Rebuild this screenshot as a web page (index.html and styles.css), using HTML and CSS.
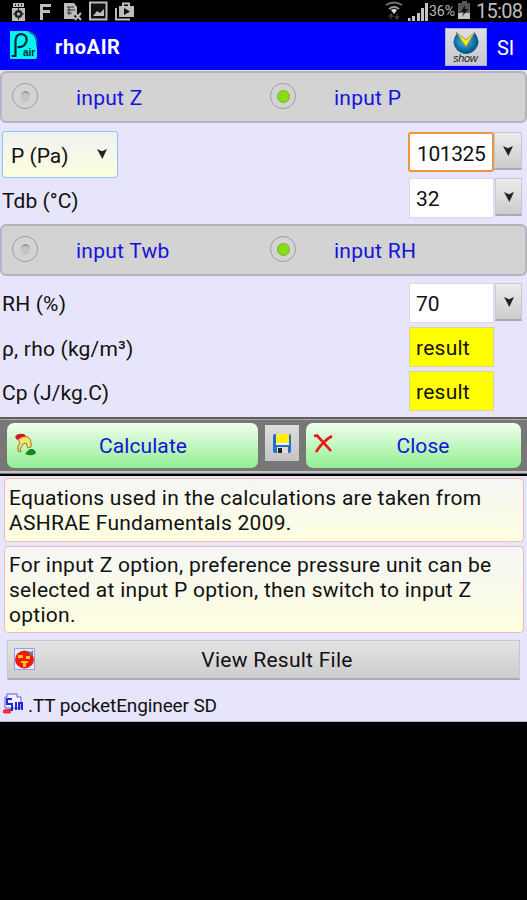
FILE: index.html
```html
<!DOCTYPE html>
<html lang="en">
<head>
<meta charset="utf-8">
<title>rhoAIR</title>
<link rel="stylesheet" href="styles.css">
</head>
<body>
<div class="status">
  <svg class="status-left" width="140" height="22" viewBox="0 0 140 22">
    <g fill="#bdbdbd"><path d="M13 3h11v4H13zM12 8h13v13H12z"/><path d="M15 4h1v2h-1zM18 4h1v2h-1zM21 4h1v2h-1z" fill="#222"/><circle cx="18.500" cy="14" r="4" fill="#222"/><path d="M18 8h1v12h-1zM13 13.500h11v1H13z" fill="#222"/><circle cx="18.500" cy="14" r="1.600"/></g>
    <path d="M40 4h11v3h-8v3h7v3h-7v7h-3z" fill="#bdbdbd"/>
    <path d="M64 3h10l3 4v6l-3 3 2 3H64z" fill="#bdbdbd"/><path d="M67 7h7M67 10h8M67 13h5M69 7v8" stroke="#333" fill="none"/><path d="m75 13 6 7m0-7-6 7" stroke="#bdbdbd" stroke-width="2"/>
    <path d="M90 2.500h16.500v17H90z" fill="#111" stroke="#bdbdbd" stroke-width="2"/><path d="m93 16 4-5 3 2 4-4v7z" fill="#bdbdbd"/>
    <path d="M116 8v11.500h14" fill="none" stroke="#bdbdbd" stroke-width="2"/><path d="M119 6h15v11h-15z" fill="#bdbdbd"/><path d="M123 6V3.500h6V6" fill="none" stroke="#bdbdbd" stroke-width="2"/><path d="m124 8 6 3.500-6 3.500z" fill="#111"/>
  </svg>
  <div class="status-right">
    <svg width="44" height="22" viewBox="0 0 44 22">
      <g fill="none" stroke="#999" stroke-width="2"><path d="M1 5q8-5 16 0" stroke="#777"/><path d="M4 9q5-4 10 0"/></g><path d="m6 10 3 4 3-4q-3-2-6 0z" fill="#ddd"/><path d="M6 14v5M12 14v5M4 17l2-3 2 3M10 16l2 3 2-3" stroke="#555" fill="none"/>
      <path d="M23 18h2.500v3H23zM27 16h3v5h-3zM32 13h3v8h-3zM36 8h3v13h-3zM40 3h3v18h-3z" fill="#c4c4c4"/>
    </svg>
    <span class="pct">36%</span>
    <svg width="13" height="22" viewBox="0 0 13 22"><path d="M4 1h5v2h3v16H0V3h4z" fill="#555"/><path d="M0 13h12v6H0z" fill="#c4c4c4"/><path d="m7 5-4 7h3l-2 5 6-8H7z" fill="#111"/></svg>
    <span class="clock">15:08</span>
  </div>
</div>
<header class="header">
  <svg class="logo" width="30" height="30" viewBox="0 0 30 30"><path d="M1 1h17q11 2 10 14v12q0 2-2 2H1z" fill="#00f4f4"/><path d="M20 2q8 3 8 15" stroke="#056" fill="none"/><path d="M2.500 26h4V12q0-8 6-8 6 1 5 7-2 7-9 6" fill="none" stroke="#06252b" stroke-width="2.200"/><text x="14" y="26" class="logo-text">air</text></svg>
  <h1 class="title">rhoAIR</h1>
  <div class="show">
    <svg width="40" height="37" viewBox="0 0 40 37"><defs><radialGradient id="ball" cx=".45" cy=".4"><stop offset="0" stop-color="#48c2e2"/><stop offset="1" stop-color="#075b91"/></radialGradient></defs><path d="M11 4q-7 9 0 17 9 8 18 0 7-8 0-17l-9 9z" fill="url(#ball)"/><path d="m10 3 10 15 9-15-9 8z" fill="#ffed00" stroke="#777" stroke-width=".7"/><text x="7" y="33" class="show-text">show</text></svg>
  </div>
  <span class="unit">SI</span>
</header>
<main class="app">
  <div class="radios">
    <label class="option"><i class="radio"></i><span>input Z</span></label>
    <label class="option"><i class="radio on"></i><span>input P</span></label>
  </div>
  <div class="fields first">
    <div class="row r-p"><div class="select"><span>P (Pa)</span><svg class="arrow" width="10" height="10" viewBox="0 0 9 9"><path d="m0 0 4.500 2L9 0 4.800 9z"/></svg></div><div class="entry"><div class="input focus">101325</div><div class="drop"><svg class="arrow" width="10" height="10" viewBox="0 0 9 9"><path d="m0 0 4.500 2L9 0 4.800 9z"/></svg></div></div></div>
    <div class="row r-t"><span class="name tdb">Tdb (°C)</span><div class="entry"><div class="input">32</div><div class="drop"><svg class="arrow" width="10" height="10" viewBox="0 0 9 9"><path d="m0 0 4.500 2L9 0 4.800 9z"/></svg></div></div></div>
  </div>
  <div class="radios">
    <label class="option"><i class="radio"></i><span>input Twb</span></label>
    <label class="option"><i class="radio on"></i><span>input RH</span></label>
  </div>
  <div class="fields second">
    <div class="row r-rh"><span class="name rh">RH (%)</span><div class="entry"><div class="input">70</div><div class="drop"><svg class="arrow" width="10" height="10" viewBox="0 0 9 9"><path d="m0 0 4.500 2L9 0 4.800 9z"/></svg></div></div></div>
    <div class="row r-out"><span class="name rho">ρ, rho (kg/m³)</span><div class="entry"><div class="input result">result</div></div></div>
    <div class="row r-out"><span class="name">Cp (J/kg.C)</span><div class="entry"><div class="input result">result</div></div></div>
  </div>
  <div class="toolbar">
    <div class="green calc"><svg class="gicon" width="24" height="26" viewBox="0 0 24 26"><path d="M4 7q5-4 10-2 4 3 3 10l-3 1-2-5-3 1-3 5 1 3-3-1v-5l2-3z" fill="#f7e270" stroke="#a07a1c"/><path d="M1 5q2-4 9-3l2 2-4 1-5 3z" fill="#d8181f"/><path d="M11 22q2-3 5-5h3q3 2 3 4-2 3-8 2z" fill="#158a1c"/></svg><span class="t-calc">Calculate</span></div>
    <div class="save"><svg width="20" height="21" viewBox="0 0 20 21"><rect x="1" y="1" width="18" height="19" rx="2" fill="#246fc9"/><path d="M4 1h13v9H4z" fill="#ffee10"/><path d="M4 10h13v2H4z" fill="#eef"/><path d="M5 14h11v6H5z" fill="#ddd"/><path d="M6 15h4v5H6z" fill="#222"/></svg></div>
    <div class="green close"><svg class="gicon x" width="20" height="20" viewBox="0 0 20 20"><path d="M1 2l3-.5Q11 9 18 17M19 2Q10 7 3 18" fill="none" stroke="#e51b13" stroke-width="2.600"/></svg><span class="t-close">Close</span></div>
  </div>
  <p class="note n1">Equations used in the calculations are taken from<br>ASHRAE Fundamentals 2009.</p>
  <p class="note n2">For input Z option, preference pressure unit can be<br>selected at input P option, then switch to input Z<br>option.</p>
  <div class="view"><svg class="vicon" width="21" height="22" viewBox="0 0 21 22"><path d="M.5.500h20v21H.5z" fill="#e8ecff" stroke="#8da2ef"/><ellipse cx="10.500" cy="11.500" rx="9.500" ry="9" fill="#f51808"/><path d="M4 7h5v3H4zM12 8h4v3h-4zM7 13h7v2h-2v4H9v-4H7z" fill="#ffc021"/><path d="M14 3l3 1 2-2v5l-3 1z" fill="#777"/></svg><span>View Result File</span></div>
  <footer class="footer"><svg width="21" height="22" viewBox="0 0 21 22"><path d="M4 1h10v3h4v11H2V4h2z" fill="#f1f1ff" stroke="#5b5bec"/><path d="M9 6H4v5h5v6H5M13 9v8M16 17v-7h3v7" fill="none" stroke="#2525dc" stroke-width="2"/><path d="M0 17q4-2 8 0v3q-4 1-8 0z" fill="#ef3434"/></svg><span>.TT pocketEngineer SD</span></footer>
</main>
</body>
</html>
```
FILE: styles.css
```css
* { box-sizing: border-box; }
body { margin: 0; background: #000; color: #111; font-family: Roboto, sans-serif; font-size: 21px; letter-spacing: .26px; line-height: 25px; width: 527px; height: 900px; overflow: hidden; }
svg { display: block; flex: none; }
.status { height: 22px; display: flex; justify-content: space-between; color: #bdbdbd; letter-spacing: 0; line-height: 22px; }
.status-right { display: flex; padding-right: 5px; }
.pct { font-size: 14px; width: 28px; padding-left: 0; margin-right: 1px; white-space: nowrap; }
.clock { font-size: 20px; margin-left: 5px; width: 46px; letter-spacing: -.7px; }
.header { height: 48px; background: #00f; display: flex; align-items: center; color: #fff; padding: 0 0 0 9px; }
.logo { margin-top: -2px; }
.logo-text { font: bold 10px "Liberation Sans", sans-serif; letter-spacing: 0; fill: #06252b; }
.title { font-size: 20px; margin: 3px auto 0 16px; letter-spacing: .6px; }
.show { width: 42px; height: 38px; background: linear-gradient(#dedee4, #c7c7cf); border: 1px solid #aeb0c5; margin-top: 1px; }
.show-text { font: italic 11px "Liberation Sans", sans-serif; letter-spacing: -.3px; fill: #222; }
.unit { width: 30px; margin: 4px 0 0 10px; font-size: 20px; letter-spacing: -.2px; }
.app { background: #e7e5fb; height: 652px; padding-top: 1px; border-bottom: 1px solid #b5b5c4; }
.radios { height: 52px; display: grid; grid-template-columns: 258px 1fr; background: #d3d3d3; border: 2px solid #b4b3be; border-left-color: #b5b4cd; border-radius: 6px; color: #1512dc; }
.option { display: flex; align-items: center; padding-left: 10px; }
.option span { margin: 3px 0 0 38px; }
.radio { width: 26px; height: 26px; border: 1px solid #999; border-radius: 50%; display: grid; place-items: center; margin-top: -2px; box-shadow: inset 0 0 1px #fff; }
.radio::after { content: ""; width: 9px; height: 9px; border-radius: 50%; border-top: 2px solid #999; background: #c4c4c4; }
.radio.on::after { width: 11px; height: 11px; border: 1px solid #73b823; background: #87dc16; }
.fields { display: flex; flex-direction: column; }
.first { height: 101px; padding-top: 8px; }
.second { height: 141px; padding-top: 6px; }
.row { display: flex; justify-content: space-between; padding: 0 5px 0 2px; }
.r-p, .r-t { height: 46px; }
.r-rh, .r-out { height: 44px; }
.name { margin-top: 11px; letter-spacing: .05px; }
.tdb { margin-top: 12px; }
.rh { margin-top: 10px; letter-spacing: .2px; }
.rho { letter-spacing: .2px; }
.select { width: 116px; height: 47px; border: 1px solid #83c8f0; border-radius: 3px; background: linear-gradient(#f1f1f4, #fcffdd); display: flex; justify-content: space-between; align-items: center; padding: 3px 10px 0 8px; letter-spacing: 0; }
.select .arrow { margin-top: -4px; }
.entry { display: flex; width: 113px; gap: 1px; }
.input { width: 85px; height: 40px; margin-top: 1px; background: #fff; border: 1px solid #dad9e8; padding: 8px 0 0 6px; letter-spacing: 0; }
.focus { border: 2px solid #ed963d; border-radius: 3px; padding: 8px 0 0 7px; margin-left: -1px; width: 87px; letter-spacing: -.4px; }
.focus + .drop { margin-left: -1px; width: 28px; }
.drop { width: 27px; height: 38px; margin-top: 1px; background: linear-gradient(#ececec, #ccc); border: 1px solid #c7c7ce; border-bottom: 2px solid #aaaab5; display: grid; place-items: center; }
.arrow { fill: #222; }
.result { background: #ff0; height: 40px; border-color: #d6d697; padding-top: 8px; letter-spacing: .25px; }
.toolbar { height: 59px; background: #777; border-top: 2px solid #5e5e5e; box-shadow: inset 0 1px #aaa; border-bottom: 2px solid #000; display: grid; grid-template-columns: 251px 34px 215px; column-gap: 7px; padding: 4px 0 0 7px; position: relative; }
.toolbar::after { content: ""; position: absolute; left: 0; right: 0; bottom: 1px; height: 2px; background: #c4c4c4; }
.green { height: 45px; border-radius: 7px; background: linear-gradient(#f1fff0, #92ee92); display: flex; align-items: center; justify-content: center; color: #1613d5; }
.gicon { margin-left: 7px; }
.calc .gicon { margin-top: -2px; }
.x { margin-top: -3px; }
.green span { flex: 1; text-align: center; padding-top: 2px; letter-spacing: .1px; }
.green .t-calc { margin-right: 10px; }
.green .t-close { margin-right: 8px; }
.save { height: 36px; margin-top: 2px; background: linear-gradient(#ddd, #c4c4c4); display: grid; place-items: center; }
.note { margin: 0 3px 0 4px; border: 1px solid #f2b9ba; border-radius: 4px; background: linear-gradient(#f5f6f5, #feffdf); padding: 7px 0 0 4px; white-space: nowrap; font-size: 21px; }
.n1 { height: 64px; margin-top: 2px; }
.n2 { height: 87px; margin-top: 4px; padding-top: 6px; letter-spacing: .28px; }
.view { margin: 7px 7px 0; height: 40px; background: linear-gradient(#e4e4e4, #ccc); border: 1px solid #c7c7cf; border-bottom: 2px solid #aaa9b6; display: flex; align-items: center; padding-left: 6px; }
.vicon { margin-top: -2px; }
.view span { flex: 1; text-align: center; margin: 2px 0 0; letter-spacing: .26px; }
.footer { display: flex; align-items: center; padding-left: 3px; height: 28px; margin-top: 10px; font-size: 19px; gap: 4px; letter-spacing: -.12px; }
.footer span { margin-top: 3px; }
```
